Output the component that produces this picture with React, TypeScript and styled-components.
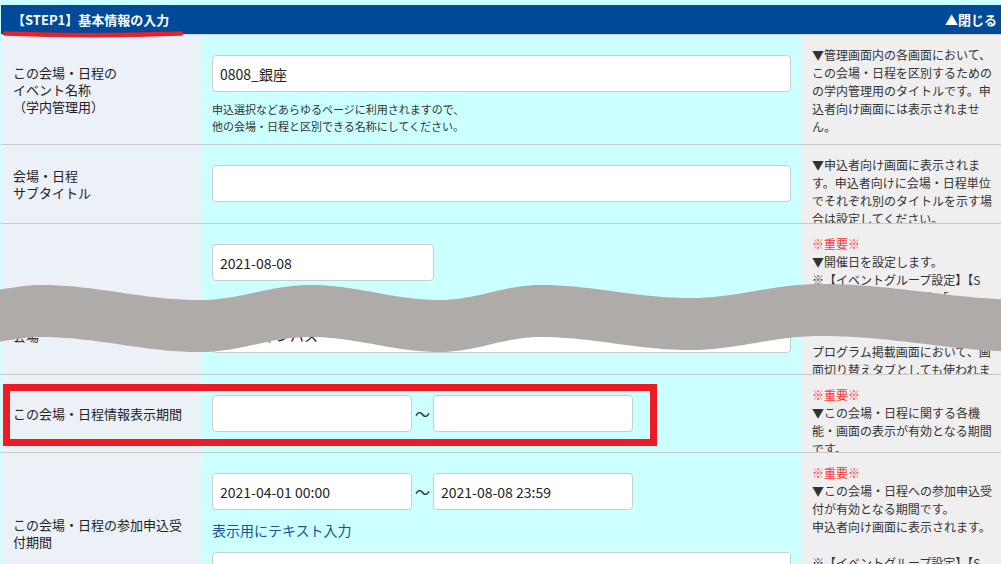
import React from "react";
import styled, { createGlobalStyle } from "styled-components";

const Global = createGlobalStyle`
  html, body { margin: 0; padding: 0; background: #ccffff; }
  body {
    font-family: "Noto Sans CJK JP", "Noto Sans", sans-serif;
    color: #222;
    overflow: hidden;
  }
  * { box-sizing: border-box; }
`;

const Page = styled.div`
  position: relative;
  width: 1001px;
  height: 564px;
  overflow: hidden;
  padding-top: 5px;
`;

const Panel = styled.div`
  margin-left: 1px;
`;

const Header = styled.div`
  height: 30px;
  background: #004a97;
  border-bottom: 1px solid #c9d2de;
  display: flex;
  align-items: center;
  justify-content: space-between;
  padding: 0 4px 0 11px;
  color: #fff;
  font-weight: 700;
  font-size: 13px;
`;

const Row = styled.div<{ $h: number }>`
  display: grid;
  grid-template-columns: 200px 601px 199px;
  grid-template-rows: minmax(0, 1fr);
  height: ${(p) => p.$h}px;
  border-bottom: 1px solid #c9c9c9;
`;

const LabelCell = styled.div<{ $bottom?: boolean }>`
  background: #ecf0f7;
  display: flex;
  flex-direction: column;
  justify-content: ${(p) => (p.$bottom ? "flex-end" : "center")};
  padding: ${(p) => (p.$bottom ? "0 12px 30px" : "0 12px")};
  font-size: 13px;
  line-height: 17px;
  color: #222;
  overflow: hidden;
`;

const LabelText = styled.span<{ $mb?: number }>`
  display: block;
  margin-bottom: ${(p) => p.$mb ?? 0}px;
`;

const InputCell = styled.div`
  background: #ccffff;
  padding: 20px 11px 0;
  display: flex;
  flex-direction: column;
  align-items: flex-start;
  overflow: hidden;
`;

const TextInput = styled.input<{ $w: number; $mt?: number }>`
  flex: none;
  width: ${(p) => p.$w}px;
  height: 37px;
  margin-top: ${(p) => p.$mt ?? 0}px;
  border: 1px solid #cccccc;
  border-radius: 4px;
  background: #fff;
  padding: 0 7px;
  font-family: "Noto Sans CJK JP", "Noto Sans", sans-serif;
  font-size: 14px;
  color: #222;
  outline: none;
`;

const Note = styled.p`
  margin: 9px 0 0;
  font-size: 11px;
  line-height: 17px;
  color: #333;
`;

const Range = styled.div`
  display: flex;
  align-items: center;
`;

const Tilde = styled.span`
  width: 21px;
  text-align: center;
  font-size: 15px;
  color: #333;
`;

const TextLink = styled.a`
  margin-top: 10px;
  font-size: 14px;
  line-height: 20px;
  color: #1f4f95;
  text-decoration: none;
  cursor: pointer;
`;

const HelpCell = styled.div`
  background: #efefef;
  padding: 11px 0 0 10px;
  font-size: 12px;
  line-height: 18px;
  color: #333;
  overflow: hidden;
`;

const Line = styled.span<{ $important?: boolean }>`
  display: block;
  white-space: nowrap;
  min-height: 18px;
  color: ${(p) => (p.$important ? "#ff3333" : "#333")};
`;

const Overlay = styled.svg`
  position: absolute;
  left: 0;
  top: 0;
  pointer-events: none;
`;

const RedBox = styled.div`
  position: absolute;
  left: 3px;
  top: 384px;
  width: 654px;
  height: 62px;
  border: 7px solid #ed1c24;
  pointer-events: none;
`;

function Help({ lines }: { lines: string[] }) {
  return (
    <HelpCell>
      {lines.map((l, i) => (
        <Line key={i} $important={l === "※重要※"}>
          {l}
        </Line>
      ))}
    </HelpCell>
  );
}

const topKeys: [number, number][] = [
  [-20, 291],
  [40, 285],
  [200, 300],
  [310, 285],
  [440, 300],
  [540, 285],
  [690, 298],
  [820, 284],
  [1030, 300],
];

function topAt(x: number): number {
  for (let i = 0; i < topKeys.length - 1; i++) {
    const [x0, y0] = topKeys[i];
    const [x1, y1] = topKeys[i + 1];
    if (x >= x0 && x <= x1) {
      const t = (x - x0) / (x1 - x0);
      const c = (1 - Math.cos(Math.PI * t)) / 2;
      return y0 + (y1 - y0) * c;
    }
  }
  return 292;
}

function wavePath(): string {
  const top: string[] = [];
  const bottom: string[] = [];
  for (let x = -10; x <= 1012; x += 4) {
    const y = topAt(x);
    top.push(`${x},${y.toFixed(1)}`);
    bottom.unshift(`${x},${(y + 52).toFixed(1)}`);
  }
  return `M${top.join(" L")} L${bottom.join(" L")} Z`;
}

export default function App() {
  return (
    <Page>
      <Global />
      <Panel>
        <Header>
          <span>【STEP1】基本情報の入力</span>
          <span>▲閉じる</span>
        </Header>

        <Row $h={110}>
          <LabelCell>
            <LabelText>この会場・日程の</LabelText>
            <LabelText>イベント名称</LabelText>
            <LabelText>（学内管理用）</LabelText>
          </LabelCell>
          <InputCell>
            <TextInput $w={579} defaultValue="0808_銀座" />
            <Note>
              申込選択などあらゆるページに利用されますので、
              <br />
              他の会場・日程と区別できる名称にしてください。
            </Note>
          </InputCell>
          <Help
            lines={[
              "▼管理画面内の各画面において、",
              "この会場・日程を区別するための",
              "の学内管理用のタイトルです。申",
              "込者向け画面には表示されませ",
              "ん。",
            ]}
          />
        </Row>

        <Row $h={79}>
          <LabelCell>
            <LabelText>会場・日程</LabelText>
            <LabelText>サブタイトル</LabelText>
          </LabelCell>
          <InputCell>
            <TextInput $w={579} defaultValue="" />
          </InputCell>
          <Help
            lines={[
              "▼申込者向け画面に表示されま",
              "す。申込者向けに会場・日程単位",
              "でそれぞれ別のタイトルを示す場",
              "合は設定してください。",
            ]}
          />
        </Row>

        <Row $h={151}>
          <LabelCell $bottom>
            <LabelText $mb={10}>開催日</LabelText>
            <LabelText>会場</LabelText>
          </LabelCell>
          <InputCell>
            <TextInput $w={222} defaultValue="2021-08-08" />
            <TextInput $w={579} $mt={35} defaultValue="銀座キャンパス" />
          </InputCell>
          <Help
            lines={[
              "※重要※",
              "▼開催日を設定します。",
              "※【イベントグループ設定】【S",
              "TEP1】基本情報の入力「",
              "会場・日程名」は、申込者向け",
              "",
              "プログラム掲載画面において、画",
              "面切り替えタブとしても使われま",
              "す。",
            ]}
          />
        </Row>

        <Row $h={78}>
          <LabelCell>
            <LabelText>この会場・日程情報表示期間</LabelText>
          </LabelCell>
          <InputCell>
            <Range>
              <TextInput $w={200} defaultValue="" />
              <Tilde>～</Tilde>
              <TextInput $w={200} defaultValue="" />
            </Range>
          </InputCell>
          <Help
            lines={[
              "※重要※",
              "▼この会場・日程に関する各機",
              "能・画面の表示が有効となる期間",
              "です。",
            ]}
          />
        </Row>

        <Row $h={160}>
          <LabelCell>
            <LabelText>この会場・日程の参加申込受付期間</LabelText>
          </LabelCell>
          <InputCell>
            <Range>
              <TextInput $w={200} defaultValue="2021-04-01 00:00" />
              <Tilde>～</Tilde>
              <TextInput $w={200} defaultValue="2021-08-08 23:59" />
            </Range>
            <TextLink>表示用にテキスト入力</TextLink>
            <TextInput $w={579} $mt={12} defaultValue="" />
          </InputCell>
          <Help
            lines={[
              "※重要※",
              "▼この会場・日程への参加申込受",
              "付が有効となる期間です。",
              "申込者向け画面に表示されます。",
              "",
              "※【イベントグループ設定】【S",
            ]}
          />
        </Row>
      </Panel>

      <Overlay width={1001} height={564} viewBox="0 0 1001 564">
        <path d={wavePath()} fill="#aeaba9" />
        <path
          d="M5 33.5 Q 90 37 181 33.5"
          stroke="#e8202a"
          strokeWidth={4.5}
          strokeLinecap="round"
          fill="none"
        />
      </Overlay>
      <RedBox />
    </Page>
  );
}
